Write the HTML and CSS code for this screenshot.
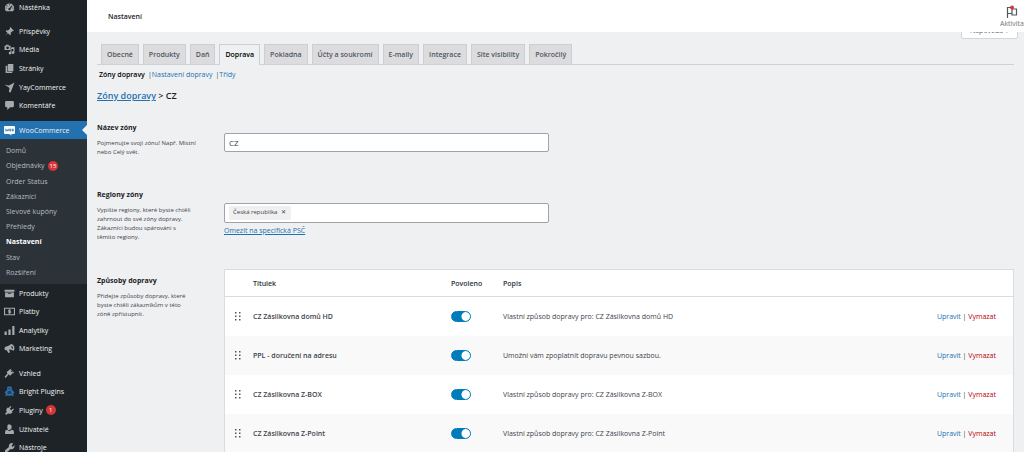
FILE: index.html
```html
<!DOCTYPE html>
<html lang="cs">
<head>
<meta charset="utf-8">
<title>Nastavení – Zóny dopravy</title>
<link rel="stylesheet" href="styles.css">
</head>
<body>
<svg class="sprite" aria-hidden="true">
  <symbol id="grip" viewBox="0 0 6 9"><path fill="#50575e" d="M0 0h1.500v1.500H0zM4 0h1.500v1.500H4zM0 3.500h1.500V5H0zM4 3.500h1.500V5H4zM0 7h1.500v1.500H0zM4 7h1.500v1.500H4z"/></symbol>
</svg>
<div class="layout">
<nav class="sidebar" aria-label="Hlavní menu">
  <ul class="group group-top">
    <li><a href="#"><svg viewBox="0 0 20 20"><path fill-rule="evenodd" d="M3.800 17h12.400A8.500 8.500 0 1 0 3.800 17zM10 4a1 1 0 1 1 0 2 1 1 0 0 1 0-2zM5.500 6a1 1 0 1 1 0 2 1 1 0 0 1 0-2zM3.700 10a1 1 0 1 1 0 2 1 1 0 0 1 0-2zM14.500 6l1 1-3.700 5.500a2 2 0 1 1-2-1.700zM16.300 10a1 1 0 1 1 0 2 1 1 0 0 1 0-2z"/></svg>Nástěnka</a></li>
  </ul>
  <ul class="group group-five">
    <li><a href="#"><svg viewBox="0 0 20 20"><path d="M11.500 2l6.500 6.500-1.500 1-1-.5-3.500 3.500.5 3-1.500 1.500-3.700-3.700L2 18l4.500-5.500L3 9l1.500-1.500 3 .5L11 4.500l-.500-1z"/></svg>Příspěvky</a></li>
    <li><a href="#"><svg viewBox="0 0 20 20"><path fill-rule="evenodd" d="M1 3h2l1-1.500h4L9 3h3v8H1zm5.500 1.500a2.500 2.500 0 1 0 0 5 2.500 2.500 0 0 0 0-5zM13.500 6H19v9.500a2.500 2.500 0 1 1-2-2.400V9h-3.500v7.500a2.500 2.500 0 1 1-2-2.400z"/></svg>Média</a></li>
    <li><a href="#"><svg viewBox="0 0 20 20"><path d="M7 2h10v13H7zM3 5h3v11h9v2H3z"/></svg>Stránky</a></li>
    <li><a href="#"><svg viewBox="0 0 20 20"><path d="M1 5l8 1.500L19 1l-7 18-3-1 1-7-3-2.500z"/></svg>YayCommerce</a></li>
    <li><a href="#"><svg viewBox="0 0 20 20"><path d="M4 2h12q2 0 2 2v7q0 2-2 2h-5l-5 5v-5H4q-2 0-2-2V4q0-2 2-2z"/></svg>Komentáře</a></li>
  </ul>
  <div class="current">
    <a href="#"><svg viewBox="0 0 22 20"><path fill="#fff" d="M2 1h18q2 0 2 2v12q0 2-2 2h-6l2 3-6-3H2q-2 0-2-2V3q0-2 2-2z"/><path fill="none" stroke="#2271b1" stroke-width="1.500" d="M3 6.500l1.200 5L6 8l2 3.500 1-5M11.500 7h2v4h-2zM16.500 7h2v4h-2z"/></svg>WooCommerce</a>
  </div>
  <ul class="submenu">
    <li><a href="#">Domů</a></li>
    <li><a href="#">Objednávky <span class="count">15</span></a></li>
    <li><a href="#">Order Status</a></li>
    <li><a href="#">Zákazníci</a></li>
    <li><a href="#">Slevové kupóny</a></li>
    <li><a href="#">Přehledy</a></li>
    <li><a href="#" class="active" aria-current="page">Nastavení</a></li>
    <li><a href="#">Stav</a></li>
    <li><a href="#">Rozšíření</a></li>
  </ul>
  <ul class="group group-four">
    <li><a href="#"><svg viewBox="0 0 20 20"><path fill-rule="evenodd" d="M1 3h18v4H1zM2 8h16v9H2zm5 1.500V11h6V9.500z"/></svg>Produkty</a></li>
    <li><a href="#"><svg viewBox="0 0 20 20"><path fill-rule="evenodd" d="M0 3h20v14H0zm2 2v10h16V5z"/><path fill="none" stroke="currentColor" stroke-width="1.800" d="M12.500 7.500h-4v2.500h3.500v2.500H7.500M10 6v8"/></svg>Platby</a></li>
    <li><a href="#"><svg viewBox="0 0 20 20"><path d="M1 12h4v6H1zM8 8h4v10H8zM15 2h4v16h-4z"/></svg>Analytiky</a></li>
    <li><a href="#"><svg viewBox="0 0 20 20"><path fill-rule="evenodd" d="M13 2q5 1 6 7 0 4-2 5-6-3-8-2l2 5-3 1-3-5q-3 1-4-2-.500-3 2-4 6-1 10-5zm1 3q-2 2 1 6 3-2-1-6z"/></svg>Marketing</a></li>
  </ul>
  <ul class="group group-five">
    <li><a href="#"><svg viewBox="0 0 20 20"><path d="M10 3l2-1 6 6-1 2-2-.5-3 4-2-.5-1.500-1.500L3 18l-2-2 5.500-6L5 8.500 5.500 7zM12 5l3 3 1-1-3-3z"/></svg>Vzhled</a></li>
    <li><a href="#"><svg viewBox="0 0 20 20"><path fill="#2f6ea5" d="M7 1h6l2 3-1 3 3 2 2 4-3 1 2 4h-4l-1-2-3 3-3-3-1 2H2l2-4-3-1 2-4 3-2-1-3z"/><path fill="#17456e" d="M8 4h4v2H8zM7 9h6l1 4-4 2-4-2z"/></svg>Bright Plugins</a></li>
    <li><a href="#"><svg viewBox="0 0 20 20"><path d="M12 2l1.500 1-3 4 2.500 2.500 4-3L18 8l-3.500 4 1 1-2 2q-3 2-6 0L4 18l-2-2 3-3.500q-2-3 0-6l2-2 1 1z"/></svg>Pluginy <span class="count">1</span></a></li>
    <li><a href="#"><svg viewBox="0 0 20 20"><path d="M10 1q4 0 4 4.500T10 11 6 5.500 10 1zM2 18v-4q0-3 4-3.500l4 2.500 4-2.500q4 .5 4 3.500v4z"/></svg>Uživatelé</a></li>
    <li><a href="#"><svg viewBox="0 0 20 20"><path d="M17 3l-3 3 .5 2 2 .5 2.500-3q1 5-3 7-2 1-4 0l-7 6.500q-2 0-3-1-.500-2 0-3L9 9q-1-4 2-6.500 3-2 6 .5z"/></svg>Nástroje</a></li>
  </ul>
</nav>
<div class="page">
  <header class="topbar">
    <h1>Nastavení</h1>
    <button type="button" class="activity"><svg viewBox="0 0 12 14"><path fill="none" stroke="#50575e" stroke-width="1.200" d="M1.500 13V2.500H6V8.500H1.500M6 4h4.500v6H6V8.500"/><circle cx="6" cy="2.500" r="2" fill="#d63638"/></svg>Aktivita</button>
  </header>
  <div class="help-row"><button type="button" class="help">Nápověda ▾</button></div>
  <main>
    <nav class="tabs" aria-label="Nastavení">
      <a href="#">Obecné</a><a href="#">Produkty</a><a href="#">Daň</a><a href="#" class="active" aria-current="page">Doprava</a><a href="#">Pokladna</a><a href="#">Účty a soukromí</a><a href="#">E-maily</a><a href="#">Integrace</a><a href="#">Site visibility</a><a href="#">Pokročilý</a>
    </nav>
    <ul class="sections">
      <li><a href="#" class="active">Zóny dopravy</a></li>
      <li>|<a href="#">Nastavení dopravy</a></li>
      <li>|<a href="#">Třídy</a></li>
    </ul>
    <h2><a href="#">Zóny dopravy</a> &gt; CZ</h2>
    <div class="form">
      <div class="field field-name">
        <div class="info"><label for="zone-name">Název zóny</label><p>Pojmenujte svoji zónu! Např. Místní<br>nebo Celý svět.</p></div>
        <div class="control"><input id="zone-name" class="box" type="text" value="CZ"></div>
      </div>
      <div class="field field-regions">
        <div class="info"><label for="zone-regions">Regiony zóny</label><p>Vypište regiony, které byste chtěli<br>zahrnout do své zóny dopravy.<br>Zákazníci budou spárováni s<br>těmito regiony.</p></div>
        <div class="control">
          <div class="box tokens"><span class="token">Česká republika <button type="button" aria-label="Odebrat">✕</button></span><input id="zone-regions" type="text"></div>
          <a class="postcode" href="#">Omezit na specifická PSČ</a>
        </div>
      </div>
      <div class="field field-methods">
        <div class="info"><h3>Způsoby dopravy</h3><p>Přidejte způsoby dopravy, které<br>byste chtěli zákazníkům v této<br>zóně zpřístupnit.</p></div>
        <table class="methods">
          <thead><tr><th class="sort"></th><th class="name">Titulek</th><th class="enabled">Povoleno</th><th>Popis</th><th></th></tr></thead>
          <tbody>
            <tr><td class="sort"><svg><use href="#grip"/></svg></td><td class="title">CZ Zásilkovna domů HD</td><td><input type="checkbox" class="toggle" aria-label="CZ Zásilkovna domů HD" checked></td><td>Vlastní způsob dopravy pro: CZ Zásilkovna domů HD</td><td class="actions"><a href="#">Upravit</a> | <a href="#" class="delete">Vymazat</a></td></tr>
            <tr><td class="sort"><svg><use href="#grip"/></svg></td><td class="title">PPL - doručení na adresu</td><td><input type="checkbox" class="toggle" aria-label="PPL - doručení na adresu" checked></td><td>Umožní vám zpoplatnit dopravu pevnou sazbou.</td><td class="actions"><a href="#">Upravit</a> | <a href="#" class="delete">Vymazat</a></td></tr>
            <tr><td class="sort"><svg><use href="#grip"/></svg></td><td class="title">CZ Zásilkovna Z-BOX</td><td><input type="checkbox" class="toggle" aria-label="CZ Zásilkovna Z-BOX" checked></td><td>Vlastní způsob dopravy pro: CZ Zásilkovna Z-BOX</td><td class="actions"><a href="#">Upravit</a> | <a href="#" class="delete">Vymazat</a></td></tr>
            <tr><td class="sort"><svg><use href="#grip"/></svg></td><td class="title">CZ Zásilkovna Z-Point</td><td><input type="checkbox" class="toggle" aria-label="CZ Zásilkovna Z-Point" checked></td><td>Vlastní způsob dopravy pro: CZ Zásilkovna Z-Point</td><td class="actions"><a href="#">Upravit</a> | <a href="#" class="delete">Vymazat</a></td></tr>
          </tbody>
        </table>
      </div>
    </div>
  </main>
</div>
</div>
</body>
</html>
```
FILE: styles.css
```css
* { box-sizing: border-box; }
body {
  margin: 0;
  height: 100vh;
  overflow: hidden;
  background: #eff0f1;
  color: #3c434a;
  font: 7px/9px "Open Sans", "Noto Sans", sans-serif;
}
ul, p, h1, h2, h3 { margin: 0; padding: 0; list-style: none; }
a { color: #2271b1; text-decoration: none; }
button, input { font: inherit; color: inherit; }
button { border: 0; padding: 0; background: none; }
.sprite { position: absolute; width: 0; height: 0; }

.layout { display: flex; min-height: 100%; }

/* Sidebar */
.sidebar { flex: none; width: 87px; background: #1d2327; }
.sidebar a {
  display: flex;
  align-items: center;
  flex: 1;
  color: #f0f0f1;
  white-space: nowrap;
}
.sidebar svg { flex: none; width: 11px; height: 11px; margin: 0 4px; fill: #a7aaad; color: #a7aaad; }
.group { display: flex; flex-direction: column; margin-bottom: 6px; }
.group li { display: flex; flex: 1; }
.group-top { height: 16px; }
.group-top a { padding-bottom: 2px; }
.group-five { height: 93px; }
.group-four { height: 74px; }
.current { display: flex; height: 18px; background: #2271b1; }
.current::after {
  content: "";
  align-self: center;
  border: 5px solid transparent;
  border-left: 0;
  border-right-color: #eff0f1;
}
.submenu {
  display: flex;
  flex-direction: column;
  height: 145px;
  padding: 4px 0;
  background: #2c3338;
}
.submenu li { display: flex; flex: 1; }
.submenu a { padding-left: 6px; color: #b5bcc2; }
.submenu .active { color: #fff; font-weight: 700; }
.count {
  margin-left: 3px;
  min-width: 10px;
  padding: 0 2px;
  border-radius: 5px;
  background: #d63638;
  color: #fff;
  font-size: 6px;
  line-height: 10px;
  text-align: center;
}

/* Top bar */
.page { flex: 1; min-width: 0; }
.topbar {
  position: relative;
  z-index: 1;
  display: flex;
  align-items: center;
  justify-content: space-between;
  height: 32px;
  padding-left: 21px;
  background: #fff;
}
.topbar h1 { font-size: 7px; font-weight: 600; color: #1d2327; }
.activity { display: flex; flex-direction: column; align-items: center; color: #757575; }
.activity svg { width: 12px; height: 14px; }
.help-row { display: flex; justify-content: flex-end; height: 12px; padding-right: 6px; }
.help {
  width: 57px;
  height: 17px;
  margin-top: -10px;
  border: 1px solid #d4d5d8;
  border-radius: 0 0 2px 2px;
  background: #fff;
  color: #646970;
}

/* Tabs and headings */
main { padding: 0 10px; }
.tabs { display: flex; gap: 4px; padding-left: 4px; border-bottom: 1px solid #d0d1d4; }
.tabs a {
  padding: 5px;
  border: 1px solid #cdced1;
  border-bottom: 0;
  background: #dcdcde;
  color: #50575e;
  font-weight: 600;
  white-space: nowrap;
}
.tabs .active { margin-bottom: -1px; background: #eff0f1; color: #000; }
.sections { display: flex; gap: 3px; padding: 5px 2px; }
.sections .active { color: #000; font-weight: 600; }
h2 { margin-top: 5px; font-size: 9px; line-height: 14px; font-weight: 600; color: #1d2327; }
h2 a { text-decoration: underline; }

/* Form */
.field { display: flex; }
.field-name { padding-top: 20px; }
.field-name .control { padding-top: 10px; }
.field-regions { padding: 33px 0 27px; }
.field-regions .control { padding-top: 13px; }
.field-methods .info { padding-top: 7px; }
.info { flex: none; width: 127px; }
.info label, .info h3 { display: block; font-size: 7px; font-weight: 700; color: #1d2327; }
.info p { margin-top: 7px; font-size: 6px; white-space: nowrap; }
.control { width: 325px; }
.box {
  display: flex;
  align-items: center;
  width: 100%;
  height: 19px;
  padding: 0 4px;
  border: 1px solid #a0a3a8;
  border-radius: 2px;
  background: #fff;
}
input.box { font-size: 8px; }
.tokens { height: 20px; }
.tokens input { flex: 1; min-width: 0; border: 0; outline: 0; background: none; }
.token {
  display: flex;
  gap: 4px;
  padding: 2px 5px 3px 4px;
  border-radius: 1px;
  background: #f0f0f1;
  font-size: 6px;
}
.postcode { display: inline-block; margin-top: 3px; text-decoration: underline; }

/* Shipping methods */
.methods {
  flex: 1;
  border: 1px solid #dcdcde;
  border-spacing: 0;
  table-layout: fixed;
  background: #fff;
}
.methods th {
  height: 27px;
  padding: 0;
  border-bottom: 1px solid #dcdcde;
  color: #2c3338;
  font-weight: 600;
  text-align: left;
}
.methods td { height: 39px; padding: 0; }
.methods tr:nth-child(even) td { background: #f9f9f9; }
.methods .sort { width: 28px; padding-left: 10px; }
.methods .sort svg { display: block; width: 6px; height: 9px; }
.methods .name { width: 198px; }
.methods .enabled { width: 52px; }
.methods .title { font-weight: 600; }
.methods .actions { padding-right: 17px; text-align: right; }
.methods .delete { color: #b80000; }
.toggle {
  appearance: none;
  display: block;
  width: 20px;
  height: 11px;
  margin: 0;
  border: 1px solid #007cba;
  border-radius: 6px;
  background: #fff;
}
.toggle:checked { background: radial-gradient(circle at 14px 50%, #fff 4px, #007cba 5px); }
```
